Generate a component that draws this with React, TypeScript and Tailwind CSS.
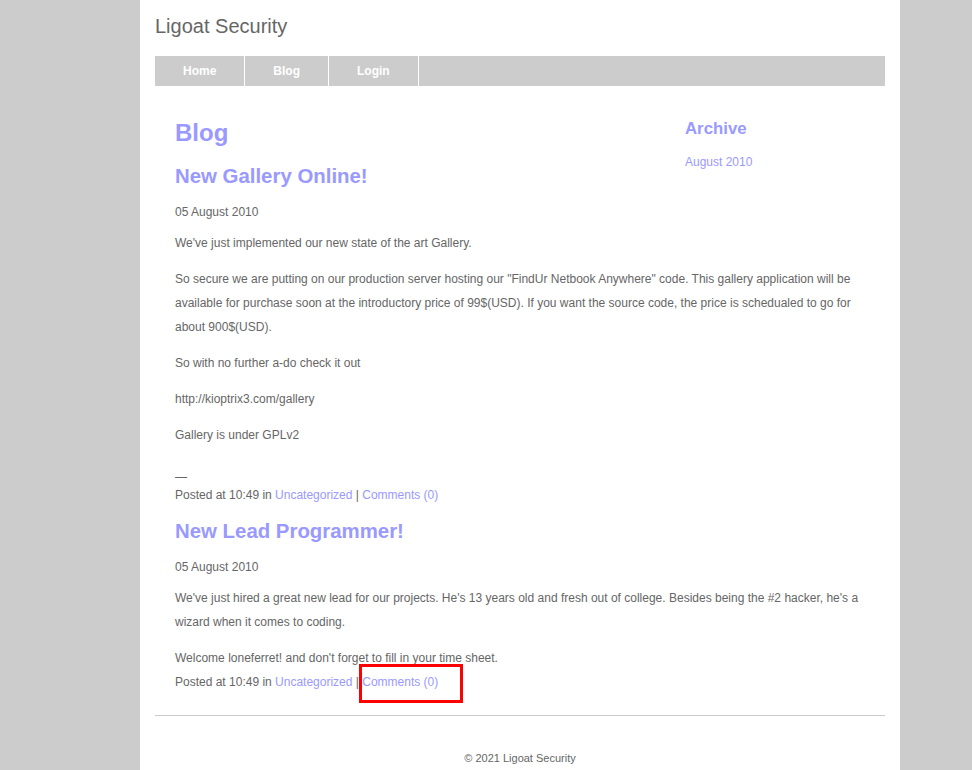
export default function App() {
  const link = "text-[#9999ff]";
  return (
    <div className="relative min-h-[770px] bg-[#cccccc] font-['Liberation_Sans',Arial,sans-serif] text-[12px] text-[#666666]">
      <div className="ml-[140px] w-[760px] min-h-[770px] bg-white px-[15px] pt-[14px] pb-10">
        <div className="text-[20px] leading-6 text-[#666666]">Ligoat Security</div>

        <nav className="mt-[18px] flex h-[30px] bg-[#cccccc]">
          {["Home", "Blog", "Login"].map((item) => (
            <a key={item} className="border-r border-white px-7 text-[12px] font-bold leading-[30px] text-white">
              {item}
            </a>
          ))}
        </nav>

        <div className="px-5 pt-[33px]">
          <aside className="float-right w-[180px]">
            <h3 className={`${link} text-[16.8px] font-bold leading-5`}>Archive</h3>
            <div className={`${link} mt-[14px] leading-[18px]`}>August 2010</div>
          </aside>

          <h1 className={`${link} text-[24px] font-bold leading-7`}>Blog</h1>

          <h2 className={`${link} mt-[17px] text-[20.4px] font-bold leading-6`}>New Gallery Online!</h2>
          <div className="mt-3 leading-6">05 August 2010</div>
          <p className="mt-[7px] leading-6">We've just implemented our new state of the art Gallery.</p>
          <p className="mt-3 leading-6">
            So secure we are putting on our production server hosting our "FindUr Netbook Anywhere" code. This gallery
            application will be available for purchase soon at the introductory price of 99$(USD). If you want the
            source code, the price is schedualed to go for about 900$(USD).
          </p>
          <p className="mt-3 leading-6">So with no further a-do check it out</p>
          <p className="mt-3 leading-6">http://kioptrix3.com/gallery</p>
          <p className="mt-3 leading-6">Gallery is under GPLv2</p>
          <div className="mt-[21px] leading-[18px]">
            —<br />
            Posted at 10:49 in <a className={link}>Uncategorized</a> | <a className={link}>Comments (0)</a>
          </div>

          <h2 className={`${link} mt-[15px] text-[20.4px] font-bold leading-6`}>New Lead Programmer!</h2>
          <div className="mt-3 leading-6">05 August 2010</div>
          <p className="mt-[7px] leading-6">
            We've just hired a great new lead for our projects. He's 13 years old and fresh out of college. Besides
            being the #2 hacker, he's a wizard when it comes to coding.
          </p>
          <p className="mt-3 leading-6">Welcome loneferret! and don't forget to fill in your time sheet.</p>
          <div className="leading-6">
            Posted at 10:49 in <a className={link}>Uncategorized</a> | <a className={link}>Comments (0)</a>
          </div>
        </div>

        <hr className="mt-[21px] border-t border-[#cccccc]" />

        <footer className="mt-[34px] text-center text-[11px] leading-4">© 2021 Ligoat Security</footer>
      </div>

      <div className="absolute left-[359px] top-[664px] h-[39px] w-[104px] border-[3px] border-[#ff0000]" />
    </div>
  );
}
